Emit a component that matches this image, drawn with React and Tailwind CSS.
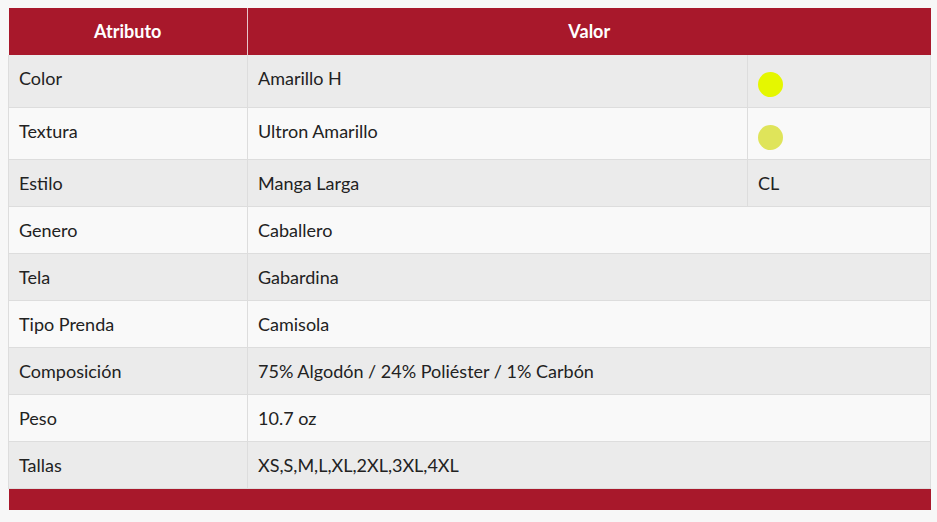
import React from "react";

const rows = [
  ["Color", "Amarillo H", { color: "#e5f700" }],
  ["Textura", "Ultron Amarillo", { color: "#dfe45a" }],
  ["Estilo", "Manga Larga", { text: "CL" }],
  ["Genero", "Caballero"],
  ["Tela", "Gabardina"],
  ["Tipo Prenda", "Camisola"],
  ["Composición", "75% Algodón / 24% Poliéster / 1% Carbón"],
  ["Peso", "10.7 oz"],
  ["Tallas", "XS,S,M,L,XL,2XL,3XL,4XL"],
];

export default function App() {
  return (
    <div
      className="min-h-[522px] w-full bg-[#f7f7f7] p-2 text-[#222]"
      style={{ fontFamily: "Lato, 'Open Sans', sans-serif" }}
    >
      <table className="w-[922px] table-fixed border-collapse text-[18px]">
        <colgroup>
          <col className="w-[239px]" />
          <col className="w-[500px]" />
          <col className="w-[183px]" />
        </colgroup>
        <thead>
          <tr className="bg-[#a8182b] text-white">
            <th className="border-r border-[#e8c5ca] px-[10px] py-3 text-center text-[18px] font-bold leading-[23px]">
              Atributo
            </th>
            <th colSpan={2} className="px-[10px] py-3 text-center text-[18px] font-bold leading-[23px]">
              Valor
            </th>
          </tr>
        </thead>
        <tbody>
          {rows.map((r, i) => {
            const bg = i % 2 === 0 ? "bg-[#ebebeb]" : "bg-[#f9f9f9]";
            const extra = r[2];
            return (
              <tr key={i} className={`${bg} border-b border-[#dddddd]`}>
                <td className="border-l border-r border-[#dddddd] px-[10px] pt-[12px] pb-[12px] align-top leading-[22px]">
                  {r[0]}
                </td>
                {extra ? (
                  <>
                    <td className="border-r border-[#dddddd] px-[10px] pt-[12px] pb-[12px] align-top leading-[22px]">
                      {r[1]}
                    </td>
                    <td className="border-r border-[#dddddd] px-[10px] align-top leading-[22px]">
                      {extra.color ? (
                        <div className="pt-[17px] pb-[9.5px]">
                          <div
                            className="h-[25px] w-[25px] rounded-full"
                            style={{ backgroundColor: extra.color }}
                          />
                        </div>
                      ) : (
                        <div className="pt-[12px] pb-[12px]">{extra.text}</div>
                      )}
                    </td>
                  </>
                ) : (
                  <td colSpan={2} className="border-r border-[#dddddd] px-[10px] pt-[12px] pb-[12px] align-top leading-[22px]">
                    {r[1]}
                  </td>
                )}
              </tr>
            );
          })}
        </tbody>
        <tfoot>
          <tr className="bg-[#a8182b]">
            <td colSpan={3} className="h-[21px] p-0"></td>
          </tr>
        </tfoot>
      </table>
    </div>
  );
}
